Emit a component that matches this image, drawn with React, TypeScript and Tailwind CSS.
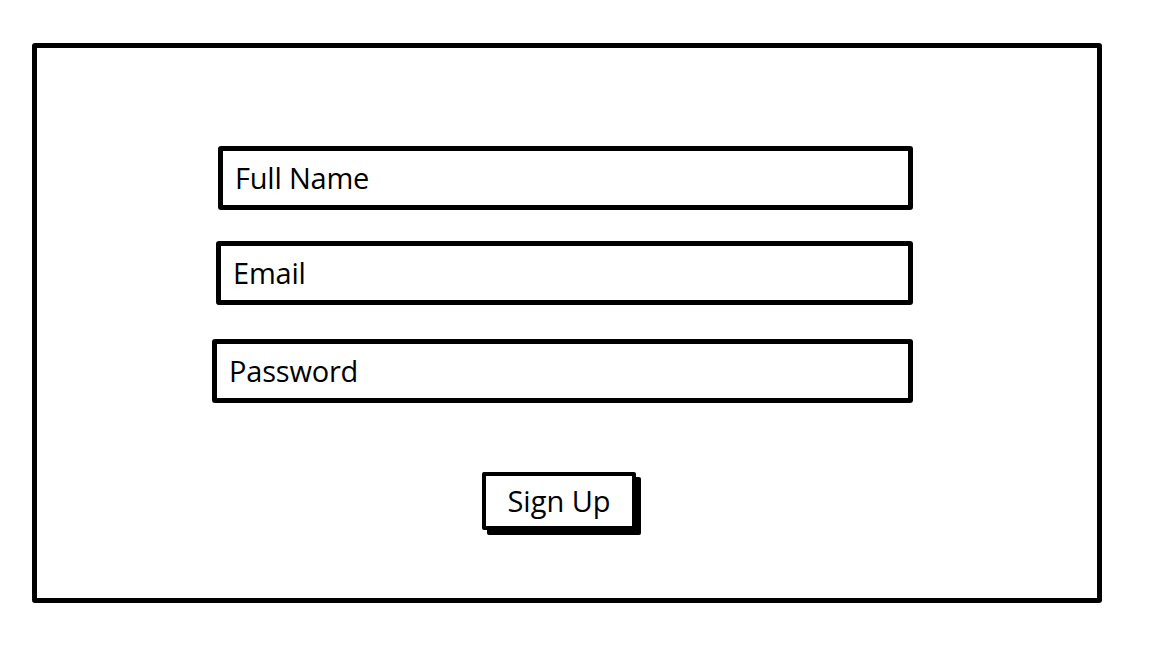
export default function App() {
  const fields = [
    { label: "Full Name", cls: "ml-[6px] w-[695px]" },
    { label: "Email", cls: "ml-[4px] mt-[31px] w-[697px]" },
    { label: "Password", cls: "ml-0 mt-[34px] w-[701px]" },
  ];

  return (
    <div className="w-[1152px] h-[658px] bg-white" style={{ fontFamily: "'Open Sans', sans-serif" }}>
      <div className="pt-[43px] pl-[32px]">
        <div className="w-[1070px] h-[560px] border-[5px] border-black rounded-[3px] flex flex-col items-start pl-[175px]">
          <div className="mt-[98px] flex flex-col items-start">
            {fields.map((f) => (
              <div
                key={f.label}
                className={`${f.cls} h-[64px] border-[5px] border-black rounded-[3px] flex items-center pl-[12px] text-[29px] font-medium text-black tracking-[-0.2px]`}
              >
                {f.label}
              </div>
            ))}
          </div>
          <button className="mt-[69px] ml-[270px] w-[154px] h-[58px] border-[4px] border-black rounded-[2px] bg-white shadow-[5px_5px_0_#000] text-[29px] font-medium text-black flex items-center justify-center">
            Sign Up
          </button>
        </div>
      </div>
    </div>
  );
}
